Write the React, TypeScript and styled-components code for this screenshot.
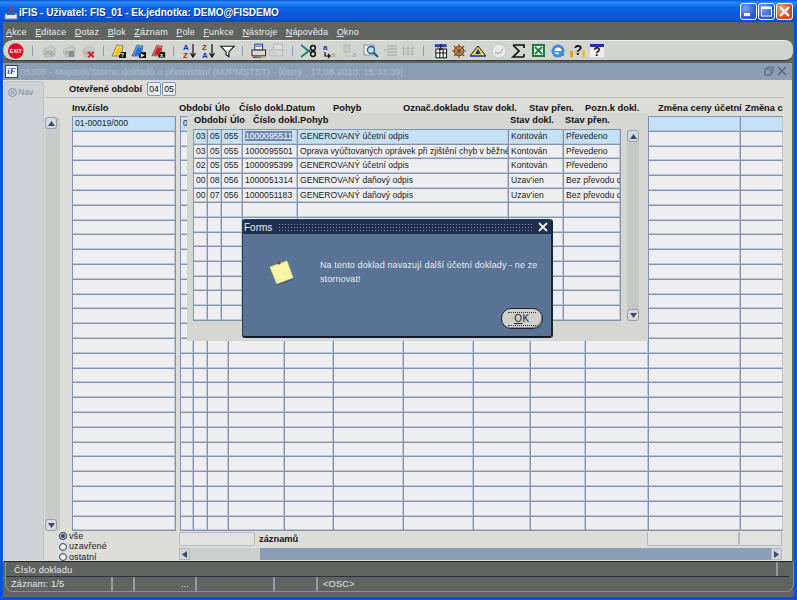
import React from "react";
import styled, { createGlobalStyle, css } from "styled-components";

const Global = createGlobalStyle`
  html, body { margin: 0; padding: 0; background: #0a50d8; overflow: hidden; }
  * { box-sizing: border-box; }
`;

const FONT = `"Liberation Sans", Arial, sans-serif`;
const LINE = "#7f93b2";
const dither = (a: string, b: string) => css`
  background: repeating-conic-gradient(${a} 0 25%, ${b} 0 50%) 0 0 / 2px 2px;
`;

const Win = styled.div`
  width: 797px; height: 600px; position: relative; overflow: hidden;
  display: flex; flex-direction: column;
  background: #0a50d8; font-family: ${FONT}; font-size: 10px; color: #222;
`;
const TitleBar = styled.div`
  height: 22px; flex: none; display: flex; align-items: center; padding: 2px 4px 0 4px;
  background: linear-gradient(180deg, #0a5ae0 0%, #2c8cf4 12%, #0a62e8 35%, #0a58dc 80%, #0a48c0 100%);
  color: #fff;
`;
const TitleText = styled.span`
  margin-left: 1px; font: bold 10px "Liberation Sans", sans-serif; white-space: nowrap; flex: 1;
  text-shadow: 1px 1px 0 #04318c;
`;
const WinButtons = styled.div`display: flex; gap: 1px; margin-top: -1px;`;
const WinBtn = styled.div<{ $red?: boolean }>`
  width: 17px; height: 17px; border: 1px solid #fff; border-radius: 3px; position: relative;
  background: ${p => p.$red ? "radial-gradient(circle at 30% 30%, #f0a080, #d8431c 70%)" : "radial-gradient(circle at 30% 30%, #7aa2f0, #2256d8 70%)"};
  display: flex; align-items: center; justify-content: center;
`;
const Chrome = styled.div`
  flex: 1; min-height: 0; margin: 0 3px 3px 3px; display: flex; flex-direction: column;
  ${dither("#5c605d", "#646865")}
`;
const MenuBar = styled.div`
  height: 18px; flex: none; display: flex; align-items: center; padding: 2px 0 0 3px; gap: 8.4px; color: #ececec; font-size: 9px; letter-spacing: .18px;
`;
const MenuItem = styled.span`
  white-space: nowrap;
  u { text-decoration: underline; }
`;
const Toolbar = styled.div`
  height: 21px; flex: none; display: flex; align-items: center; padding-left: 4px;
  ${dither("#d0d2ce", "#d6d8d4")}
  border-radius: 10px 8px 8px 10px; border-top: 1px solid #e8e8e4; border-bottom: 1px solid #3a3c3c; margin-right: 1px;
`;
const Slot = styled.div<{ $w: number }>`
  width: ${p => p.$w}px; flex: none; display: flex; align-items: center; justify-content: center; height: 18px;
`;
const Sep = styled.div`width: 1px; height: 10px; background: #8fa0b8;`;
const Gap = styled.div`height: 2px; flex: none;`;
const MdiBar = styled.div`
  height: 17px; flex: none; display: flex; align-items: center; background: #8c9db6; margin-right: 2px; padding: 0 4px 0 2px;
  color: #adb8c8; font-size: 9.5px; white-space: nowrap;
`;
const MdiLogo = styled.div`
  width: 13px; height: 13px; background: #fff; border: 1px solid #1f3fb0; color: #1f3fb0; font: italic bold 9px/11px "Liberation Serif", serif; text-align: center; margin-right: 2px; flex: none;
`;
const MdiTitle = styled.span`flex: 1;`;
const FormArea = styled.div`
  height: 482px; flex: none; display: flex; margin-right: 2px; border-left: 1px solid #eceeee; border-bottom: 1px solid #222;
  ${dither("#dadad6", "#dfdfdb")}
`;
const NavPanel = styled.div`
  width: 40px; flex: none; border-radius: 4px 4px 0 0; border: 1px solid #c0c4c8; border-bottom: none;
  ${dither("#cbcfd3", "#d1d5d8")}
  margin-top: 1px; display: flex; align-items: flex-start; padding: 5px 0 0 3px; gap: 1px; color: #7d8ea8; font-size: 8.6px; height: 479px; line-height: 11px;
`;
const NavDot = styled.span`
  width: 9px; height: 9px; border-radius: 50%; background: #a8b4c4; border: 1px solid #8496ae; box-shadow: inset 0 0 0 1px #d5dae0; margin-top: 1px; flex: none;
`;
const Content = styled.div`
  flex: 1; position: relative; min-width: 0; overflow: hidden; display: flex; flex-direction: column;
`;
const PeriodRow = styled.div`
  height: 17px; flex: none; display: flex; align-items: center; gap: 1px; padding: 1px 0 0 25px; font-weight: bold; font-size: 9.2px; color: #111;
`;
const PeriodLabel = styled.span`width: 77px; flex: none;`;
const PeriodBox = styled.div`
  width: 14px; height: 14px; border: 1px solid ${LINE}; background: #eeeef0; font-weight: normal; font-size: 8.6px; text-align: center; line-height: 12px; border-radius: 2px;
`;
const Divider = styled.div`
  height: 1px; flex: none; margin: 0 8px 0 2px; border-top: 1px solid #c2bdb6;
`;
const Head = styled.div<{ $cols: string }>`
  display: grid; grid-template-columns: ${p => p.$cols}; font-weight: bold; font-size: 9.3px; color: #111; white-space: nowrap; height: 12px; line-height: 12px;
`;
const MainHead = styled(Head)`margin: 4px 9px 0 28px; flex: none; height: 14px; overflow: hidden;`;
const MainBody = styled.div`display: flex; flex: none; height: 415px;`;
const ScrollBand = styled.div`
  width: 15px; margin: 1px 12px 0 1px; flex: none; display: flex; flex-direction: column; justify-content: space-between; border-radius: 3px;
  ${dither("#c7c9c6", "#cdcfcc")}
`;
const ArrowBtn = styled.div`
  width: 12px; height: 12px; border: 1px solid #8fa0b8; border-radius: 3px; background: #d7dadd; display: flex; align-items: center; justify-content: center; flex: none;
`;
const Tri = styled.svg<{ $side?: boolean }>`
  width: ${p => p.$side ? 5 : 7}px; height: ${p => p.$side ? 7 : 5}px; fill: #3a4a66;
`;
const Table = styled.div<{ $cols: string; $w: number; $rh?: number }>`
  width: ${p => p.$w}px; flex: none; display: grid; grid-template-columns: ${p => p.$cols}; grid-auto-rows: ${p => p.$rh ?? 14.8}px;
  border-top: 1px solid ${LINE}; border-left: 1px solid ${LINE}; align-self: flex-start; overflow: hidden;
`;
const Cell = styled.div<{ $sel?: boolean; $hl?: boolean }>`
  background: ${p => p.$sel ? "#c6e0f6" : "#eeeef0"}; border-right: 1px solid ${LINE}; border-bottom: 1px solid ${LINE};
  box-shadow: inset -1px -1px 0 #bcc7d8;
  padding-left: 2px; font-size: 8.6px; line-height: 13px; white-space: nowrap; overflow: hidden; color: #222;
  span { ${p => p.$hl ? "background: #6f88ae; color: #fff;" : ""} }
`;
const Gutter = styled.div`width: 4px; flex: none;`;
const Footer = styled.div`flex: 1; display: flex; min-height: 0;`;
const Radios = styled.div`
  width: 135px; flex: none; padding: 0 0 0 15px; display: flex; flex-direction: column; font-size: 9px; letter-spacing: .1px; color: #222;
`;
const RadioLine = styled.div`display: flex; align-items: center; gap: 2px; height: 10.4px; line-height: 10.4px;`;
const Radio = styled.span<{ $on?: boolean }>`
  width: 8px; height: 8px; border-radius: 50%; border: 1px solid #33435f; background: ${p => p.$on ? "#33435f" : "#f0f0f0"}; box-shadow: ${p => p.$on ? "inset 0 0 0 1px #e8e8e8" : "none"};
`;
const FootMain = styled.div`width: 603px; flex: none; display: flex; flex-direction: column; padding-top: 1px;`;
const FootTop = styled.div`height: 14px; flex: none; display: flex; align-items: center;`;
const FootBox = styled.div<{ $w: number }>`
  width: ${p => p.$w}px; height: 14px; flex: none; background: #e2e2e0; border: 1px solid #aeb6c2; border-top: none; border-radius: 0 0 2px 2px;
`;
const CountBox = styled(FootBox)`border: 1px solid #b8bcc0; border-radius: 2px;`;
const CountLabel = styled.span`margin-left: 4px; font-weight: bold; font-size: 9.3px; width: 388px; flex: none; color: #111;`;
const HScroll = styled.div`height: 12px; flex: none; margin-top: 2px; display: flex;`;
const HArrow = styled.div`width: 11px; background: #d0d4d8; border: 1px solid #b0b8c4; display: flex; align-items: center; justify-content: center;`;
const HThumb = styled.div`width: 70px; background: #cbcfcd;`;
const HTrack = styled.div`flex: 1; background: #8c9db6;`;

const Popup = styled.div`
  position: absolute; left: 143px; top: 33px; width: 461px; height: 228px; padding: 1px 0 0 6px; display: flex; flex-direction: column;
  ${dither("#d3d4d0", "#d9dad6")}
`;
const PopHead = styled(Head)`margin-left: 1px;`;
const PopBody = styled.div`display: flex; margin-top: 3px;`;
const PopScroll = styled.div`
  width: 12px; height: 191px; margin: 1px 0 0 6px; display: flex; flex-direction: column; justify-content: space-between; border-radius: 3px;
  ${dither("#c2c4c1", "#c9cbc8")}
`;

const Dialog = styled.div`
  position: absolute; left: 242px; top: 219px; width: 311px; height: 119px; border: 1px solid #2a3a55; border-right: 2px solid #1a2438; border-bottom: 2px solid #111a2a;
  border-radius: 3px; color: #eef; display: flex; flex-direction: column;
  ${dither("#56708f", "#5d7699")}
`;
const DlgTitle = styled.div`
  height: 14px; flex: none; background: #1f2f50; display: flex; align-items: center; padding: 0 3px 0 1px; color: #f0f0f0; font-size: 10px; border-radius: 2px 2px 0 0;
`;
const DlgGrip = styled.div`
  flex: 1; height: 8px; margin: 0 6px 0 6px;
  background-image: radial-gradient(circle, #7f8ea8 0.7px, transparent 0.9px);
  background-size: 3px 3px;
`;
const DlgBody = styled.div`flex: 1; display: flex; padding: 24px 0 0 25px; position: relative;`;
const Msg = styled.div`
  margin-left: 26px; width: 226px; font-size: 9px; line-height: 14px; letter-spacing: .12px; color: #e8ecf2;
`;
const OkBtn = styled.div`
  position: absolute; right: 8px; bottom: 7px; width: 42px; height: 21px; border-radius: 10px; background: #cfcfcb; border: 1px solid #1a2234; display: flex; align-items: center; justify-content: center;
  color: #222; font-size: 10px; letter-spacing: .6px; box-shadow: inset -1px -1px 0 #8a8a88;
  span { border-top: 1px dotted #333; border-bottom: 1px dotted #333; padding: 0 6px; line-height: 12px; }
`;

const Status = styled.div`
  flex: 1; padding: 0 0 0 2px; display: flex; flex-direction: column; color: #e6e6e6; font-size: 9.3px; letter-spacing: .15px;
`;
const StatusOutline = styled.div`
  border: 1px solid #8a8e90; border-top: none; border-radius: 0 0 8px 8px; height: 30px; display: flex; flex-direction: column;
`;
const StatusTop = styled.div`
  height: 15px; flex: none; display: flex; border-bottom: 1px solid #2c3040; margin-right: 4px;
`;
const StatusHint = styled.span`flex: 1; padding: 3px 0 0 8px; line-height: 11px;`;
const StatusEnd = styled.div`width: 13px; flex: none; border-left: 2px solid #9499a4;`;
const StatusRow = styled.div`display: flex; height: 14px; line-height: 14px;`;
const StatusCell = styled.div<{ $w: number; $end?: boolean }>`
  width: ${p => p.$w}px; flex: none; padding: 0 6px 0 5px; border-right: ${p => p.$end ? "none" : "2px solid #9499a4"}; text-align: left;
`;
const StatusDots = styled(StatusCell)`text-align: right;`;

const gray = "#b6b8b6";
const Svg = ({ children }: { children: React.ReactNode }) => (
  <svg width="18" height="16" viewBox="0 0 18 16">{children}</svg>
);
const sheet = (fill: string, back: string, tip: string) => (
  <>
    <path d="M2 13 L7 2 L13 3 L11 13 Z" fill={back} stroke="#222" strokeWidth=".5" />
    <rect x="9" y="9" width="7" height="6" fill="#111" />
    <path d="M4 12 L8 4 L12 5 L10 12Z" fill={fill} />
    <text x="10.5" y="14.3" fontSize="6" fontWeight="bold" fill="#fff" fontFamily="Liberation Sans">{tip}</text>
  </>
);
const grayDoc = (
  <>
    <path d="M3 7 L11 3 L15 5 L15 13 L5 14 Z" fill="#c8cac8" stroke={gray} />
    <path d="M5 9 H13 M5 11 H13" stroke="#9a9c9a" />
  </>
);
const icons: Record<string, React.ReactNode> = {
  exit: (
    <svg width="18" height="18" viewBox="0 0 18 18">
      <circle cx="9" cy="9" r="8" fill="#d8102c" />
      <text x="9" y="11" fontSize="5.5" fontWeight="bold" fill="#fff" textAnchor="middle" fontFamily="Liberation Sans">EXIT</text>
    </svg>
  ),
  add: <Svg>{grayDoc}<path d="M12 8 V14 M9 11 H15" stroke="#aeb0ae" strokeWidth="2" /></Svg>,
  doc: <Svg>{grayDoc}<rect x="9" y="8" width="5" height="6" fill="#8a8c8a" /></Svg>,
  del: <Svg>{grayDoc}<path d="M9 9 L15 15 M15 9 L9 15" stroke="#d81818" strokeWidth="2" /></Svg>,
  fy: <Svg>{sheet("#f4c820", "#ffe060", "?")}</Svg>,
  fb: <Svg>{sheet("#2070e0", "#60a8f0", "▸")}</Svg>,
  fr: <Svg>{sheet("#d02028", "#f07070", "x")}</Svg>,
  az: (
    <Svg>
      <text x="2" y="7" fontSize="8" fontWeight="bold" fill="#1030c0" fontFamily="Liberation Sans">A</text>
      <text x="2" y="15" fontSize="8" fontWeight="bold" fill="#c01020" fontFamily="Liberation Sans">Z</text>
      <path d="M12 1 V13 M9.5 10 L12 14 L14.5 10" stroke="#111" fill="none" strokeWidth="1.2" />
    </Svg>
  ),
  za: (
    <Svg>
      <text x="2" y="7" fontSize="8" fontWeight="bold" fill="#c01020" fontFamily="Liberation Sans">Z</text>
      <text x="2" y="15" fontSize="8" fontWeight="bold" fill="#1030c0" fontFamily="Liberation Sans">A</text>
      <path d="M12 1 V13 M9.5 10 L12 14 L14.5 10" stroke="#111" fill="none" strokeWidth="1.2" />
    </Svg>
  ),
  filter: <Svg><path d="M2 3 H16 L10.5 9 V14 L7.5 12 V9 Z" fill="#fff" stroke="#111" strokeWidth="1.2" /></Svg>,
  print: (
    <Svg>
      <rect x="5" y="1" width="8" height="6" fill="#fff" stroke="#1030a0" />
      <path d="M6 3 H12" stroke="#2040c0" />
      <rect x="2" y="7" width="14" height="6" fill="#d8d8d8" stroke="#222" />
      <path d="M3 14.5 H8" stroke="#d02020" strokeWidth="1.5" /><path d="M8 14.5 H12" stroke="#20a040" strokeWidth="1.5" /><path d="M12 14.5 H16" stroke="#e8c020" strokeWidth="1.5" />
    </Svg>
  ),
  printg: (
    <Svg>
      <rect x="6" y="1" width="9" height="6" fill="#e0e0e0" stroke={gray} />
      <rect x="2" y="7" width="13" height="6" fill="#d8d8d8" stroke={gray} />
      <path d="M4 10 H10" stroke={gray} />
    </Svg>
  ),
  cut: (
    <Svg>
      <path d="M1 2 L10 9 M1 14 L10 7" stroke="#1a7a7a" strokeWidth="1.6" />
      <circle cx="13" cy="5" r="2.4" fill="none" stroke="#111" strokeWidth="1.5" />
      <circle cx="13" cy="11" r="2.4" fill="none" stroke="#111" strokeWidth="1.5" />
    </Svg>
  ),
  copy: (
    <Svg>
      <text x="3" y="7" fontSize="8" fontWeight="bold" fill="#1030c0" fontFamily="Liberation Sans">a</text>
      <text x="11" y="14" fontSize="8" fill="#9a9a9a" fontFamily="Liberation Sans">a</text>
      <path d="M5 9 V13 H10 M8 11 L10 13 L8 15" stroke="#111" fill="none" strokeWidth="1.2" />
    </Svg>
  ),
  copyg: (
    <Svg>
      <rect x="3" y="2" width="6" height="7" fill="#c8cac8" stroke={gray} />
      <text x="11" y="14" fontSize="8" fill="#a8a8a8" fontFamily="Liberation Sans">a</text>
      <path d="M5 9 V13 H10" stroke={gray} fill="none" />
    </Svg>
  ),
  find: (
    <Svg>
      <rect x="2" y="2" width="10" height="10" fill="#eee" stroke="#8a8c8a" />
      <circle cx="9" cy="7" r="3.5" fill="#bfe0f0" stroke="#1a5a8a" strokeWidth="1.3" />
      <path d="M11.5 9.5 L16 14" stroke="#1a5a8a" strokeWidth="2" />
    </Svg>
  ),
  list: <Svg><path d="M6 3 H16 M6 6 H16 M6 9 H16 M6 12 H16 M3 7 H5" stroke="#a0a2a0" strokeWidth="1.2" /></Svg>,
  cols: <Svg><path d="M4 2 V14 M9 2 V14 M14 2 V14 M2 5 H16 M2 8 H16 M2 11 H16" stroke="#b0b2b0" /></Svg>,
  cal: (
    <Svg>
      <rect x="3" y="1" width="12" height="3" fill="#2040c0" />
      <rect x="4" y="6" width="11" height="9" fill="#f4f4f4" stroke="#111" />
      <path d="M4 10 H15 M8 6 V15 M11.5 6 V15" stroke="#111" /><path d="M9 1 V7 M7 5 L9 7 L11 5" stroke="#111" fill="none" />
    </Svg>
  ),
  wheel: (
    <Svg>
      <circle cx="9" cy="8" r="4.5" fill="none" stroke="#8a4a10" strokeWidth="1.4" />
      <path d="M9 1 V15 M2 8 H16 M4 3 L14 13 M14 3 L4 13" stroke="#8a4a10" strokeWidth="1.2" />
    </Svg>
  ),
  tri: (
    <Svg>
      <path d="M1 13 L9 3 L17 13 Z" fill="#f4d860" stroke="#111" />
      <path d="M6 11 L9 6 L12 11 Z" fill="#1030b0" />
      <path d="M1 13 H17" stroke="#2050c0" strokeWidth="1.5" />
    </Svg>
  ),
  clock: (
    <Svg>
      <circle cx="9" cy="8" r="7" fill="#e8e8e8" stroke="#c8c8c8" />
      <path d="M5 10 H10 L13 6" stroke="#a0a0a0" fill="none" />
    </Svg>
  ),
  sigma: <Svg><path d="M3 2 H14 V5 M14 14 V11 M14 14 H3 L9 8 L3 2" fill="none" stroke="#111" strokeWidth="1.7" /></Svg>,
  excel: (
    <Svg>
      <rect x="2" y="1" width="13" height="13" fill="#1e7a3c" />
      <rect x="4" y="3" width="9" height="9" fill="#e8f4e8" />
      <path d="M5 4 L12 11 M12 4 L5 11" stroke="#1e7a3c" strokeWidth="1.8" />
    </Svg>
  ),
  ie: (
    <Svg>
      <circle cx="9" cy="8" r="6.5" fill="#3f8ae0" />
      <circle cx="9" cy="8" r="3.5" fill="#fff" />
      <path d="M5.5 8 H13 V9.5 H5.5 Z" fill="#3f8ae0" />
      <path d="M10 9 L15 11 V13 H9 Z" fill="#3f8ae0" />
    </Svg>
  ),
  helpb: (
    <Svg>
      <rect x="1" y="8" width="3" height="6" fill="#e0a020" />
      <rect x="13" y="7" width="3" height="7" fill="#e8c040" />
      <text x="9" y="12" fontSize="14" fontWeight="bold" textAnchor="middle" fill="#111" fontFamily="Liberation Sans">?</text>
    </Svg>
  ),
  helpt: (
    <Svg>
      <rect x="2" y="1" width="14" height="3" fill="#2030b0" />
      <rect x="2" y="4" width="14" height="10" fill="#f0f0f0" />
      <text x="9" y="13" fontSize="12" fontWeight="bold" textAnchor="middle" fill="#111" fontFamily="Liberation Sans">?</text>
    </Svg>
  ),
};

const tools: [string, number][] = [
  ["exit", 17], ["|", 32], ["add", 47], ["doc", 69], ["del", 90], ["|", 102], ["fy", 118], ["fb", 139], ["fr", 160], ["|", 173],
  ["az", 188], ["za", 209], ["filter", 228], ["|", 243], ["print", 257], ["printg", 278], ["|", 292], ["cut", 308], ["copy", 329],
  ["copyg", 350], ["find", 371], ["list", 391], ["cols", 408], ["|", 423], ["cal", 440], ["wheel", 458], ["tri", 478], ["clock", 498],
  ["sigma", 520], ["excel", 539], ["ie", 558], ["helpb", 578], ["helpt", 597],
];

const menus: [string, string][] = [
  ["A", "kce"], ["E", "ditace"], ["D", "otaz"], ["B", "lok"], ["Z", "áznam"], ["P", "ole"], ["F", "unkce"], ["N", "ástroje"], ["N", "ápověda"], ["O", "kno"],
];

const MAIN_COLS = "13px 14px 21px 56px 49px 70px 70px 57px 55px 63px 92px 43px";
const POP_COLS = "14px 14px 21px 55px 211px 55px 57px";
const popData: string[][] = [
  ["03", "05", "055", "1000095511", "GENEROVANÝ účetní odpis", "Kontován", "Převedeno"],
  ["03", "05", "055", "1000095501", "Oprava vyúčtovaných oprávek při zjištění chyb v běžném", "Kontován", "Převedeno"],
  ["02", "05", "055", "1000095399", "GENEROVANÝ účetní odpis", "Kontován", "Převedeno"],
  ["00", "08", "056", "1000051314", "GENEROVANÝ daňový odpis", "Uzav'ien", "Bez převodu do"],
  ["00", "07", "056", "1000051183", "GENEROVANÝ daňový odpis", "Uzav'ien", "Bez převodu do"],
  ...Array.from({ length: 8 }, () => ["", "", "", "", "", "", ""]),
];
const mainHeads = ["Období", "Úlo", "Číslo dokl.", "Datum", "Pohyb", "Označ.dokladu", "Stav dokl.", "Stav přen.", "Pozn.k dokl.", "Změna ceny účetní", "Změna ceny"];
const Up = () => <ArrowBtn><Tri viewBox="0 0 7 5"><path d="M3.5 0 L7 5 H0 Z" /></Tri></ArrowBtn>;
const Down = () => <ArrowBtn><Tri viewBox="0 0 7 5"><path d="M0 0 H7 L3.5 5 Z" /></Tri></ArrowBtn>;

export default function App() {
  return (
    <Win>
      <Global />
      <TitleBar>
        <svg width="14" height="15" viewBox="0 0 14 15">
          <rect x="1" y="9" width="12" height="5" fill="#e8e8f0" stroke="#889" />
          <path d="M6 1 C9 3 4 5 7 8 M9 3 C10 5 8 6 9 8" stroke="#d84020" fill="none" />
          <rect x="3" y="7" width="8" height="3" fill="#3060b0" />
        </svg>
        <TitleText>iFIS - Uživatel: FIS_01 - Ek.jednotka: DEMO@FISDEMO</TitleText>
        <WinButtons>
          <WinBtn><svg width="9" height="9" viewBox="0 0 9 9"><rect x="0" y="6" width="6" height="3" fill="#fff" /></svg></WinBtn>
          <WinBtn><svg width="11" height="11" viewBox="0 0 11 11"><rect x=".5" y="1" width="10" height="9" fill="none" stroke="#fff" /><rect x=".5" y="1" width="10" height="2" fill="#fff" /></svg></WinBtn>
          <WinBtn $red><svg width="11" height="11" viewBox="0 0 11 11"><path d="M1 1 L10 10 M10 1 L1 10" stroke="#fff" strokeWidth="2.2" /></svg></WinBtn>
        </WinButtons>
      </TitleBar>
      <Chrome>
        <MenuBar>
          {menus.map(([a, b], i) => <MenuItem key={i}><u>{a}</u>{b}</MenuItem>)}
        </MenuBar>
        <Toolbar>
          {tools.map(([name, c], i) => {
            const prev = i === 0 ? 7 : (tools[i - 1][1] + c) / 2;
            const next = i === tools.length - 1 ? c + 10 : (tools[i + 1][1] + c) / 2;
            return <Slot key={i} $w={next - prev}>{name === "|" ? <Sep /> : icons[name]}</Slot>;
          })}
        </Toolbar>
        <Gap />
        <MdiBar>
          <MdiLogo>iF</MdiLogo>
          <MdiTitle>05305 - Majetek/Storno dokladů o přemístění (MJPMSTST) - [úterý , 17.08.2010; 15:33:39]</MdiTitle>
          <svg width="24" height="11" viewBox="0 0 24 11">
            <rect x="1" y="3" width="6" height="6" fill="none" stroke="#5a6678" />
            <path d="M3 3 V1 H9 V7 H7" fill="none" stroke="#5a6678" />
            <path d="M14 1 L22 9 M22 1 L14 9" stroke="#5a6678" strokeWidth="1.5" />
          </svg>
        </MdiBar>
        <FormArea>
          <NavPanel><NavDot />Nav</NavPanel>
          <Content>
            <PeriodRow>
              <PeriodLabel>Otevřené období</PeriodLabel>
              <PeriodBox>04</PeriodBox>
              <PeriodBox>05</PeriodBox>
            </PeriodRow>
            <Divider />
            <MainHead $cols="107px 36px 24px 47px 47px 70px 70px 56px 56px 73px 87px 38px">
              <span>Inv.číslo</span>
              {mainHeads.map(h => <span key={h}>{h}</span>)}
            </MainHead>
            <MainBody>
              <ScrollBand><Up /><Down /></ScrollBand>
              <Table $cols="1fr" $w={104}>
                {Array.from({ length: 28 }, (_, r) => (
                  <Cell key={r} $sel={r === 0}>{r === 0 ? "01-00019/000" : ""}</Cell>
                ))}
              </Table>
              <Gutter />
              <Table $cols={MAIN_COLS} $w={603}>
                {Array.from({ length: 28 }, (_, r) =>
                  Array.from({ length: 12 }, (_, c) => (
                    <Cell key={`${r}-${c}`} $sel={r === 0}>{r === 0 && c === 0 ? "0" : ""}</Cell>
                  ))
                )}
              </Table>
            </MainBody>
            <Footer>
              <Radios>
                <RadioLine><Radio $on />vše</RadioLine>
                <RadioLine><Radio />uzavřené</RadioLine>
                <RadioLine><Radio />ostatní</RadioLine>
              </Radios>
              <FootMain>
                <FootTop>
                  <CountBox $w={76} />
                  <CountLabel>záznamů</CountLabel>
                  <FootBox $w={92} />
                  <FootBox $w={43} />
                </FootTop>
                <HScroll>
                  <HArrow><Tri $side viewBox="0 0 5 7"><path d="M5 0 V7 L0 3.5 Z" /></Tri></HArrow>
                  <HThumb />
                  <HTrack />
                  <HArrow><Tri $side viewBox="0 0 5 7"><path d="M0 0 V7 L5 3.5 Z" /></Tri></HArrow>
                </HScroll>
              </FootMain>
            </Footer>
            <Popup>
              <PopHead $cols="36px 23px 47px 210px 55px 60px">
                <span>Období</span><span>Úlo</span><span>Číslo dokl.</span><span>Pohyb</span><span>Stav dokl.</span><span>Stav přen.</span>
              </PopHead>
              <PopBody>
                <Table $cols={POP_COLS} $w={428} $rh={14.67}>
                  {popData.map((row, r) => row.map((v, c) => (
                    <Cell key={`${r}-${c}`} $sel={r === 0} $hl={r === 0 && c === 3}><span>{v}</span></Cell>
                  )))}
                </Table>
                <PopScroll><Up /><Down /></PopScroll>
              </PopBody>
            </Popup>
          </Content>
        </FormArea>
        <Status>
          <StatusOutline>
            <StatusTop>
              <StatusHint>Číslo dokladu</StatusHint>
              <StatusEnd />
            </StatusTop>
            <StatusRow>
              <StatusCell $w={107}>Záznam: 1/5</StatusCell>
              <StatusCell $w={22} />
              <StatusDots $w={62}>...</StatusDots>
              <StatusCell $w={78} />
              <StatusCell $w={43} />
              <StatusCell $w={100} $end>&lt;OSC&gt;</StatusCell>
            </StatusRow>
          </StatusOutline>
        </Status>
      </Chrome>
      <Dialog>
        <DlgTitle>
          Forms
          <DlgGrip />
          <svg width="10" height="10" viewBox="0 0 10 10"><path d="M1 1 L9 9 M9 1 L1 9" stroke="#f0f0f0" strokeWidth="1.8" /></svg>
        </DlgTitle>
        <DlgBody>
          <svg width="26" height="28" viewBox="0 0 26 28" style={{ flex: "none" }}>
            <path d="M2 9 L19 3 L25 20 L9 26 Z" fill="#f8f4a8" stroke="#d8d490" />
            <path d="M9 26 L25 20 L25.5 21.5 L9.5 27.5 Z" fill="#2a3a50" opacity=".5" />
            <circle cx="11" cy="5" r="1.5" fill="#b03030" />
          </svg>
          <Msg>Na tento doklad navazují další účetní doklady - ne ze stornovat!</Msg>
          <OkBtn><span><u>O</u>K</span></OkBtn>
        </DlgBody>
      </Dialog>
    </Win>
  );
}
